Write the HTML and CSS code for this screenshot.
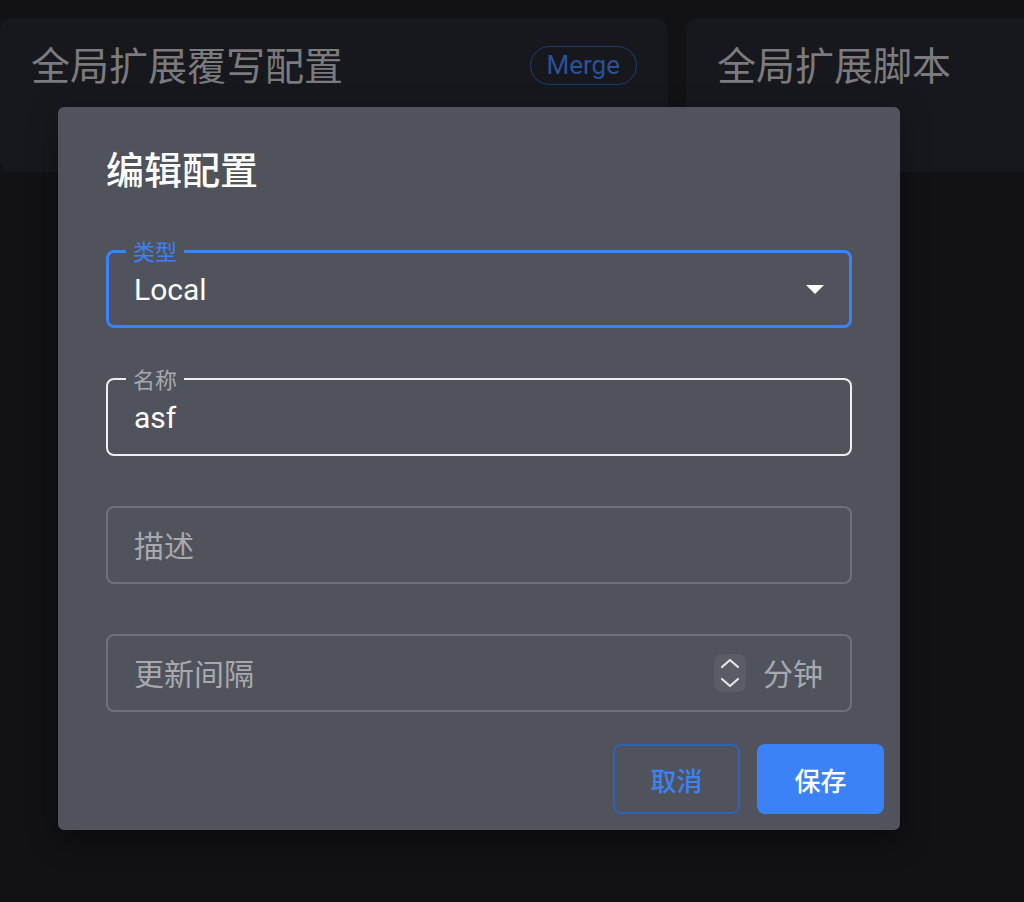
FILE: index.html
```html
<!DOCTYPE html>
<html lang="zh-CN">
<head>
<meta charset="utf-8">
<title>编辑配置</title>
<link rel="stylesheet" href="styles.css">
</head>
<body>
<div class="page">
  <section class="card">
    <div class="card-head">
      <h2 class="card-title">全局扩展覆写配置</h2>
      <span class="badge">Merge</span>
    </div>
  </section>
  <section class="card card-clipped">
    <div class="card-head">
      <h2 class="card-title">全局扩展脚本</h2>
    </div>
  </section>
</div>

<div class="dialog" role="dialog">
  <h1 class="dialog-title">编辑配置</h1>
  <div class="fields">
    <div class="field field-focused">
      <span class="field-label label-blue">类型</span>
      <span class="field-value">Local</span>
      <svg class="caret" width="18" height="9" viewBox="0 0 18 9"><polygon points="0,0 18,0 9,9" fill="#ffffff"/></svg>
    </div>
    <div class="field field-filled">
      <span class="field-label">名称</span>
      <span class="field-value">asf</span>
    </div>
    <div class="field field-empty">
      <span class="field-placeholder">描述</span>
    </div>
    <div class="field field-empty">
      <span class="field-placeholder">更新间隔</span>
      <span class="spinner">
        <svg width="32" height="38" viewBox="0 0 32 38"><polyline points="8,13 16,6 24,13" fill="none" stroke="#e4e5e8" stroke-width="2.2" stroke-linecap="round" stroke-linejoin="round"/><polyline points="8,25 16,32 24,25" fill="none" stroke="#e4e5e8" stroke-width="2.2" stroke-linecap="round" stroke-linejoin="round"/></svg>
      </span>
      <span class="unit">分钟</span>
    </div>
  </div>
  <div class="actions">
    <button class="btn btn-outline">取消</button>
    <button class="btn btn-primary">保存</button>
  </div>
</div>
</body>
</html>
```
FILE: styles.css
```css
html, body {
  margin: 0;
  padding: 0;
}
body {
  background: #111116;
  width: 1024px;
  height: 902px;
  overflow: hidden;
  font-family: Roboto, "Noto Sans CJK SC", "Noto Sans", sans-serif;
  position: relative;
}
.page {
  display: flex;
  gap: 18px;
  padding-top: 18px;
  width: 1024px;
  overflow: hidden;
}
.card {
  flex: 0 0 668px;
  height: 154px;
  box-sizing: border-box;
  background: #17181d;
  border-radius: 12px;
  padding: 22px 31px 0 31px;
}
.card-clipped {
  flex: 1 1 auto;
  border-radius: 12px 0 0 12px;
}
.card-head {
  display: flex;
  justify-content: space-between;
  align-items: flex-start;
}
.card-title {
  margin: 0;
  font-family: "Noto Sans CJK SC", sans-serif;
  font-weight: 400;
  font-size: 39px;
  line-height: 46px;
  color: #7b7b7d;
}
.badge {
  margin-top: 6px;
  height: 39px;
  box-sizing: border-box;
  padding: 0 16px;
  border: 1.5px solid #1e3c6c;
  border-radius: 20px;
  color: #2a5296;
  font-size: 26px;
  line-height: 37px;
  font-family: Roboto, sans-serif;
}
.dialog {
  position: absolute;
  left: 58px;
  top: 107px;
  width: 842px;
  height: 723px;
  box-sizing: border-box;
  background: #50535c;
  border-radius: 6px;
  box-shadow: 0 10px 30px rgba(0,0,0,0.35);
  padding: 38px 16px 16px 48px;
  display: flex;
  flex-direction: column;
}
.dialog-title {
  margin: 0;
  font-family: "Noto Sans CJK SC", sans-serif;
  font-weight: 500;
  font-size: 38px;
  line-height: 46px;
  color: #ffffff;
}
.fields {
  margin-top: 59px;
  margin-right: 32px;
  display: flex;
  flex-direction: column;
  gap: 50px;
}
.field {
  position: relative;
  height: 78px;
  box-sizing: border-box;
  border-radius: 8px;
  display: flex;
  align-items: center;
  padding: 0 27px 0 26px;
  border: 2px solid #6e717a;
}
.field-focused {
  border: 3px solid #3b82f6;
  padding-left: 25px;
  padding-right: 25px;
}
.field-filled {
  border-color: #eeeeee;
}
.field-label {
  position: absolute;
  left: 18px;
  top: -14px;
  padding: 0 7px;
  background: #50535c;
  font-family: "Noto Sans CJK SC", sans-serif;
  font-size: 22px;
  line-height: 24px;
  color: #a7a9ae;
}
.field-focused .field-label {
  top: -15px;
  left: 17px;
}
.label-blue {
  color: #3b82f6;
}
.field-value {
  flex: 1;
  font-size: 30px;
  color: #ffffff;
  font-family: Roboto, "Noto Sans CJK SC", sans-serif;
}
.caret {
  display: block;
}
.field-placeholder {
  flex: 1;
  font-family: "Noto Sans CJK SC", sans-serif;
  font-size: 30px;
  line-height: 40px;
  margin-top: -3px;
  color: #a7a9ae;
}
.spinner {
  width: 32px;
  height: 38px;
  border-radius: 8px;
  background: #5a5d66;
  display: flex;
  margin-right: 17px;
}
.unit {
  font-family: "Noto Sans CJK SC", sans-serif;
  font-size: 30px;
  line-height: 40px;
  margin-top: -3px;
  color: #a7a9ae;
}
.actions {
  margin-top: auto;
  display: flex;
  justify-content: flex-end;
  gap: 17px;
}
.btn {
  height: 70px;
  box-sizing: border-box;
  border-radius: 8px;
  font-family: "Noto Sans CJK SC", sans-serif;
  font-size: 26px;
  font-weight: 500;
  cursor: pointer;
}
.btn-outline {
  width: 127px;
  background: transparent;
  border: 2px solid #3064b3;
  color: #3b82f6;
}
.btn-primary {
  width: 127px;
  background: #3b82f6;
  border: none;
  color: #ffffff;
}
```
